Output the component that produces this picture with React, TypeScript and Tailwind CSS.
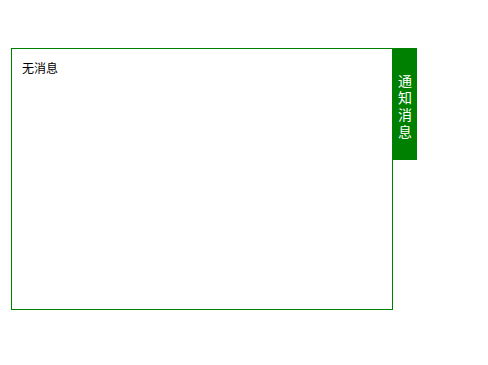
export default function App() {
  return (
    <div className="w-[488px] h-[365px] bg-white pl-[11px] pt-[48px] font-['Microsoft_YaHei','Noto_Sans_CJK_SC',sans-serif]">
      <div className="flex items-start">
        <div className="w-[382px] h-[262px] border border-[#008000] p-[10px] text-[12px] leading-[17px] text-black">
          无消息
        </div>
        <div className="w-[24px] h-[112px] bg-[#008000] text-white text-[14px] leading-[17px] pt-[24px] flex flex-col items-center">
          <span>通</span>
          <span>知</span>
          <span>消</span>
          <span>息</span>
        </div>
      </div>
    </div>
  );
}
